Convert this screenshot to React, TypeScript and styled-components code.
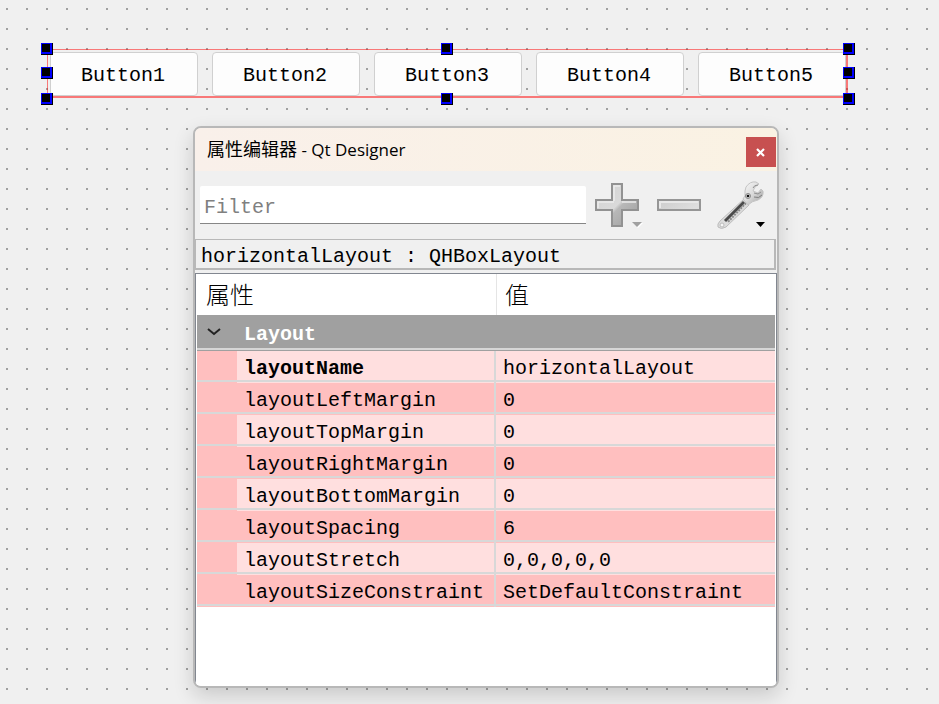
import React from "react";
import styled, { createGlobalStyle } from "styled-components";

const mono = `"Liberation Mono", "Noto Sans CJK SC", monospace`;

const GlobalStyle = createGlobalStyle`
  *, *::before, *::after { box-sizing: border-box; }
  html { min-height: 100%; background: #f0f0f0; }
  body { margin: 0; color: #000; font: 20px/28px ${mono}; }
  button, input { font: inherit; color: inherit; }
`;

const Canvas = styled.main`
  min-height: 100vh;
  padding: 49px 91px 16px 47px;
  background: conic-gradient(from 270deg at 2px 2px, #a0a0a0 90deg, transparent 0) 6px 8px / 20px 20px #f0f0f0;
`;

const Layout = styled.section`
  position: relative;
  display: flex;
  gap: 14px;
  padding: 2px 0 0 2px;
  border: solid rgba(255, 0, 0, 0.5);
  border-width: 1px 2px 2px 1px;
`;

const PushButton = styled.button`
  flex: 1;
  min-width: 0;
  height: 44px;
  padding: 4px 2px 0 0;
  border: 1px solid #d0d0d0;
  border-radius: 4px;
  background: #fdfdfd;
`;

const Handle = styled.i<{ $x: "left" | "middle" | "right"; $y: "top" | "middle" | "bottom" }>`
  position: absolute;
  width: 12px;
  height: 12px;
  left: ${({ $x }) => ({ left: "-7px", middle: "calc(50% - 6px)", right: "calc(100% - 3px)" })[$x]};
  top: ${({ $y }) => ({ top: "-7px", middle: "calc(50% - 6px)", bottom: "calc(100% - 3px)" })[$y]};
  border: solid #000;
  border-width: 0 1px 1px 0;
  background: linear-gradient(#000, #000) 1px 1px / 8px 8px no-repeat #00f;
`;

const Dialog = styled.section`
  display: flex;
  flex-direction: column;
  min-height: 562px;
  margin: 28px 69px 0 146px;
  border: 2px solid #b8b8b8;
  border-radius: 8px;
  overflow: hidden;
  background: #f0f0f0;
  box-shadow: 0 8px 20px rgba(0, 0, 0, 0.16);
`;

const TitleBar = styled.header`
  display: flex;
  align-items: flex-start;
  justify-content: space-between;
  height: 43px;
  padding: 9px 1px 0 12px;
  background: linear-gradient(90deg, #f9f0ea, #faf2e3);
`;

const Title = styled.h1`
  margin: 0;
  font: 400 18px/22px "Noto Sans CJK SC", sans-serif;
`;

const TitleLatin = styled.span`
  font-family: "Open Sans", sans-serif;
  font-size: 17px;
`;

const Close = styled.button`
  display: grid;
  place-items: center;
  width: 30px;
  height: 30px;
  padding: 0;
  border: 0;
  background: #c75050;
`;

const Toolbar = styled.div`
  display: flex;
  align-items: center;
  height: 68px;
  padding: 0 5px;
`;

const Filter = styled.input`
  flex: 1;
  min-width: 0;
  height: 38px;
  padding: 6px 5px 0 4px;
  border: 0;
  border-bottom: 1px solid #868686;
  border-radius: 2px 2px 0 0;
  background: #fff;
  &::placeholder { color: #808080; opacity: 1; }
`;

const Tool = styled.button`
  width: 62px;
  height: 60px;
  padding: 0;
  border: 0;
  background: none;
  svg { display: block; }
`;

const ObjectLabel = styled.div`
  height: 31px;
  margin-right: 1px;
  padding: 3px 5px 0;
  line-height: 28px;
  border: solid #b8b8b8;
  border-width: 1px 2px 2px 1px;
  white-space: nowrap;
`;

const Tree = styled.div`
  flex: 1;
  margin-top: 3px;
  padding: 0 1px;
  border: 1px solid #828790;
  border-bottom: 0;
  background: #fff;
`;

const Table = styled.table`
  width: 100%;
  table-layout: fixed;
  border-collapse: collapse;
  th, td { padding: 0; text-align: left; font-weight: 400; white-space: nowrap; }
`;

const IndentCol = styled.col`
  width: 40px;
`;

const NameCol = styled.col`
  width: 259px;
`;

const HeaderRow = styled.tr`
  height: 41px;
  font: 300 24px/32px "Noto Sans CJK SC", sans-serif;
  th { padding: 0 0 2px 9px; font-weight: 300; }
  th:last-child { background: linear-gradient(#e5e5e5, #e5e5e5) 0 0 / 1px 100% no-repeat; }
`;

const GroupRow = styled.tr`
  height: 36px;
  color: #fff;
  background: linear-gradient(#d6d6d6, #d6d6d6) 0 33px / 100% 2px no-repeat #a0a0a0;
  th { padding: 4px 0 0 7px; }
`;

const GroupName = styled.span`
  font-weight: 700;
`;

const Expander = styled.button`
  display: block;
  width: 40px;
  height: 32px;
  padding: 0 0 2px 10px;
  border: 0;
  background: none;
  svg { display: block; }
`;

const gridLine = "linear-gradient(#d8d8d8, #d8d8d8)";

const PropertyRow = styled.tr<{ $pale: boolean; $bold: boolean }>`
  height: 32px;
  td, th {
    height: 32px;
    padding: 4px 7px 0;
    background: ${gridLine} 0 29px / 100% 2px no-repeat ${({ $pale }) => ($pale ? "#ffdfdf" : "#ffbfbf")};
  }
  td:first-child { background-color: #ffbfbf; }
  th {
    font-weight: ${({ $bold }) => ($bold ? 700 : 400)};
    background-image: ${gridLine}, ${gridLine};
    background-position: 0 29px, 100% 0;
    background-size: 100% 2px, 2px 100%;
  }
`;

const properties = [
  { name: "layoutName", value: "horizontalLayout", changed: true },
  { name: "layoutLeftMargin", value: "0" },
  { name: "layoutTopMargin", value: "0" },
  { name: "layoutRightMargin", value: "0" },
  { name: "layoutBottomMargin", value: "0" },
  { name: "layoutSpacing", value: "6" },
  { name: "layoutStretch", value: "0,0,0,0,0" },
  { name: "layoutSizeConstraint", value: "SetDefaultConstraint" },
];

const handles = [
  ["left", "top"], ["middle", "top"], ["right", "top"],
  ["left", "middle"], ["right", "middle"],
  ["left", "bottom"], ["middle", "bottom"], ["right", "bottom"],
] as const;

const PlusIcon = () => (
  <svg width="62" height="60" viewBox="0 0 62 60" aria-hidden="true">
    <defs>
      <linearGradient id="plusFill" x1="0" y1="0" x2="1" y2="1">
        <stop offset="0" stopColor="#d2d2d2" />
        <stop offset="0.5" stopColor="#dadada" />
        <stop offset="0.56" stopColor="#b8b8b8" />
        <stop offset="1" stopColor="#9c9c9c" />
      </linearGradient>
    </defs>
    <path d="M26 9h10v16h16v10H36v16H26V35H10V25h16z" fill="url(#plusFill)" stroke="#929292" strokeWidth="2" />
    <path d="M28 26V11h6M12 33v-6h16M36 27h14" fill="none" stroke="#ececec" strokeWidth="1.5" />
    <path d="M47 48h10l-5 5z" fill="#fff" />
    <path d="M46 47h10l-5 5z" fill="#a0a0a0" />
  </svg>
);

const MinusIcon = () => (
  <svg width="62" height="60" viewBox="0 0 62 60" aria-hidden="true">
    <defs>
      <linearGradient id="minusFill" x1="0" y1="0" x2="1" y2="0.3">
        <stop offset="0" stopColor="#cccccc" />
        <stop offset="1" stopColor="#dedede" />
      </linearGradient>
    </defs>
    <path d="M10 25h42v10H10z" fill="url(#minusFill)" stroke="#969696" strokeWidth="2" />
    <path d="M12 33v-6h38" fill="none" stroke="#e8e8e8" strokeWidth="2" />
  </svg>
);

const WrenchIcon = () => (
  <svg width="62" height="60" viewBox="0 0 62 60" aria-hidden="true">
    <defs>
      <linearGradient id="wrenchHead" x1="0" y1="0" x2="1" y2="1">
        <stop offset="0" stopColor="#fafafa" />
        <stop offset="0.5" stopColor="#dadada" />
        <stop offset="1" stopColor="#9a9a9a" />
      </linearGradient>
    </defs>
    <path d="M34 24L10 46Q7 49 8 52Q11 55 16 52L39 30z" fill="#dcdcdc" stroke="#bcbcbc" />
    <path d="M34 27L15 46" stroke="#4a4a4a" strokeWidth="3" />
    <path d="M36 28L18 47" stroke="#8a8a8a" strokeWidth="2" strokeDasharray="2 1" />
    <circle cx="12" cy="50" r="2" fill="#f6f6f6" stroke="#bbb" />
    <path d="M36 12Q40 6 46 7L49 9L45 12L43 16L48 18L51 14L53 16Q54 22 48 25Q42 26 38 30L33 24Q36 21 35 16Z" fill="url(#wrenchHead)" stroke="#c4c4c4" />
    <path d="M43 13Q44 10 48 10M44 18L48 19L51 17" fill="none" stroke="#909090" />
    <path d="M44 22Q49 24 52 20" fill="none" stroke="#808080" />
    <circle cx="38" cy="21" r="2.500" fill="#d8d8d8" stroke="#888" />
    <circle cx="38" cy="21" r="1.300" fill="#111" />
    <path d="M46 47h9l-4.500 5z" fill="#000" />
  </svg>
);

export default function App() {
  return (
    <>
      <GlobalStyle />
      <Canvas>
        <Layout>
          {[1, 2, 3, 4, 5].map((n) => (
            <PushButton key={n} type="button">Button{n}</PushButton>
          ))}
          {handles.map(([x, y]) => (
            <Handle key={x + y} $x={x} $y={y} />
          ))}
        </Layout>

        <Dialog>
          <TitleBar>
            <Title>属性编辑器<TitleLatin> - Qt Designer</TitleLatin></Title>
            <Close type="button" aria-label="Close">
              <svg width="10" height="10" viewBox="0 0 10 10">
                <path d="M1 2l7 7M8 2L1 9" stroke="#fff" strokeWidth="2.200" />
              </svg>
            </Close>
          </TitleBar>
          <Toolbar>
            <Filter type="text" placeholder="Filter" aria-label="Filter" />
            <Tool type="button" aria-label="Add property" disabled><PlusIcon /></Tool>
            <Tool type="button" aria-label="Remove property" disabled><MinusIcon /></Tool>
            <Tool type="button" aria-label="Configure"><WrenchIcon /></Tool>
          </Toolbar>
          <ObjectLabel>horizontalLayout : QHBoxLayout</ObjectLabel>
          <Tree>
            <Table>
              <colgroup>
                <IndentCol />
                <NameCol />
                <col />
              </colgroup>
              <thead>
                <HeaderRow>
                  <th colSpan={2} scope="col">属性</th>
                  <th scope="col">值</th>
                </HeaderRow>
              </thead>
              <tbody>
                <GroupRow>
                  <td>
                    <Expander type="button" aria-label="Collapse Layout" aria-expanded="true">
                      <svg width="14" height="8" viewBox="0 0 14 8">
                        <path d="M1 1l6 5 6-5" fill="none" stroke="#222" strokeWidth="2" />
                      </svg>
                    </Expander>
                  </td>
                  <th colSpan={2} scope="rowgroup"><GroupName>Layout</GroupName></th>
                </GroupRow>
                {properties.map((p, i) => (
                  <PropertyRow key={p.name} $pale={i % 2 === 0} $bold={!!p.changed}>
                    <td />
                    <th scope="row">{p.name}</th>
                    <td>{p.value}</td>
                  </PropertyRow>
                ))}
              </tbody>
            </Table>
          </Tree>
        </Dialog>
      </Canvas>
    </>
  );
}
